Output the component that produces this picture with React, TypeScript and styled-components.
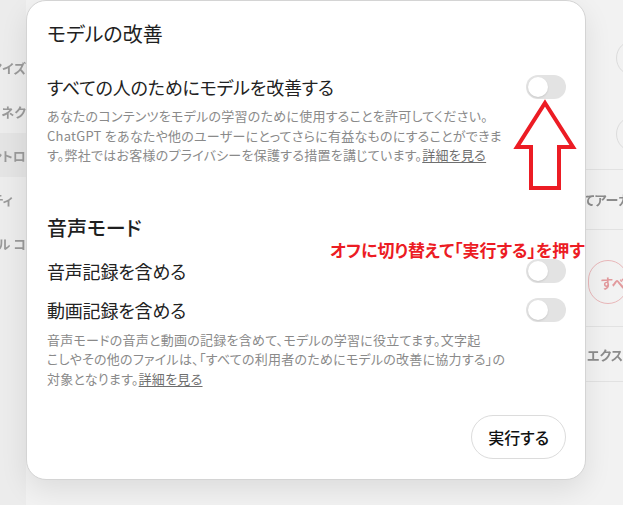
import React, { useState } from 'react';
import styled, { createGlobalStyle } from 'styled-components';

const GlobalStyle = createGlobalStyle`
	html, body {
		margin: 0;
		padding: 0;
		background: #eeeeee;
		overflow: hidden;
	}
	body {
		font-family: "Noto Sans CJK JP", "Noto Sans", sans-serif;
		font-feature-settings: "palt";
	}
`;

const Stage = styled.div`
	position: relative;
	width: 623px;
	height: 505px;
	overflow: hidden;
	background: #eeeeee;
`;

// blurred settings page behind the dialog
const Backdrop = styled.div`
	display: flex;
	width: 100%;
	height: 100%;
	filter: blur(0.7px);
`;

const SideNav = styled.nav`
	width: 26px;
	padding-top: 45px;
	display: flex;
	flex-direction: column;
	overflow: hidden;
	background: #ececec;
`;

const NavItem = styled.div<{ $active?: boolean; $pr?: number }>`
	height: 44px;
	display: flex;
	align-items: center;
	justify-content: flex-end;
	padding-right: ${(p) => p.$pr || 0}px;
	white-space: nowrap;
	font-size: 13px;
	font-weight: 600;
	color: #9a9a9a;
	background: ${(p) => (p.$active ? '#e4e4e4' : 'transparent')};
`;

const MainPane = styled.main`
	flex: 1;
	display: flex;
	justify-content: flex-end;
	background: #f2f2f2;
`;

const MainColumn = styled.div`
	width: 63px;
	display: flex;
	flex-direction: column;
	overflow: hidden;
`;

const BgRow = styled.div<{ $h: number; $line?: boolean; $align?: string; $pb?: number }>`
	height: ${(p) => p.$h}px;
	display: flex;
	align-items: ${(p) => p.$align || 'center'};
	padding-bottom: ${(p) => p.$pb || 0}px;
	white-space: nowrap;
	font-size: 13px;
	font-weight: 600;
	color: #8c8c8c;
	border-bottom: ${(p) => (p.$line ? '1px solid #e2e2e2' : 'none')};
	box-sizing: border-box;
`;

const BgPill = styled.div<{ $red?: boolean }>`
	margin-left: ${(p) => (p.$red ? '28px' : '56px')};
	height: ${(p) => (p.$red ? '44px' : '36px')};
	padding: 0 12px;
	display: flex;
	align-items: center;
	border: 1px solid ${(p) => (p.$red ? '#e9b7b9' : '#dcdcdc')};
	border-radius: 22px;
	color: #e29a9d;
	min-width: 40px;
	box-sizing: border-box;
`;

const BgLabel = styled.span<{ $indent?: number }>`
	margin-left: ${(p) => p.$indent || 0}px;
`;

const Dialog = styled.section`
	position: absolute;
	left: 26px;
	top: 0;
	width: 560px;
	height: 480px;
	box-sizing: border-box;
	padding: 19px 19px 20px 20px;
	display: flex;
	flex-direction: column;
	background: #ffffff;
	border: 1px solid #d4d4d4;
	border-radius: 20px;
	box-shadow: 0 10px 28px rgba(0, 0, 0, 0.09);
`;

const Title = styled.h2`
	margin: 0;
	font-size: 20px;
	line-height: 28px;
	font-weight: 400;
	color: #1f1f1f;
`;

const SectionTitle = styled.h3`
	margin: 49px 0 0;
	font-size: 20px;
	line-height: 28px;
	font-weight: 500;
	color: #1f1f1f;
`;

const SettingRow = styled.div<{ $gap?: number }>`
	height: 39px;
	margin-top: ${(p) => p.$gap || 0}px;
	display: flex;
	align-items: center;
	justify-content: space-between;
`;

const Label = styled.span`
	font-size: 18px;
	letter-spacing: -0.2px;
	color: #222222;
`;

const Track = styled.button<{ $on: boolean }>`
	width: 40px;
	height: 24px;
	padding: 0;
	border: none;
	border-radius: 12px;
	background: ${(p) => (p.$on ? '#10a37f' : '#e3e3e3')};
	display: flex;
	align-items: center;
	justify-content: ${(p) => (p.$on ? 'flex-end' : 'flex-start')};
	cursor: pointer;
`;

const Knob = styled.span`
	width: 20px;
	height: 20px;
	margin: 0 2px;
	border-radius: 50%;
	background: #ffffff;
	box-shadow: 0 1px 2px rgba(0, 0, 0, 0.12);
`;

const Description = styled.p`
	margin: 0;
	font-size: 13px;
	line-height: 19.5px;
	letter-spacing: 0.25px;
	color: #8a8a8a;
	white-space: nowrap;
`;

const MoreLink = styled.a`
	color: #6f6f6f;
	text-decoration: underline;
	text-underline-offset: 2px;
`;

const Footer = styled.div`
	margin-top: auto;
	display: flex;
	justify-content: flex-end;
`;

const PillButton = styled.button`
	height: 44px;
	padding: 0 16px;
	border: 1px solid #dcdcdc;
	border-radius: 22px;
	background: #ffffff;
	font-family: inherit;
	font-feature-settings: "palt";
	font-size: 16px;
	font-weight: 500;
	color: #111111;
	cursor: pointer;
`;

// red annotation drawn over the screenshot
const Note = styled.div`
	position: absolute;
	left: 330px;
	top: 239px;
	font-size: 17px;
	line-height: 22px;
	font-weight: 700;
	color: #ec1c24;
	white-space: nowrap;
`;

const ArrowMark = styled.svg`
	position: absolute;
	left: 510px;
	top: 95px;
`;

const Toggle = ({ on, onChange }: { on: boolean; onChange: (v: boolean) => void }) => (
	<Track $on={on} onClick={() => onChange(!on)}>
		<Knob />
	</Track>
);

const App = () => {
	const [improve, setImprove] = useState(false);
	const [audio, setAudio] = useState(false);
	const [video, setVideo] = useState(false);

	return (
		<Stage>
			<GlobalStyle />
			<Backdrop>
				<SideNav>
					<NavItem>カスタマイズ</NavItem>
					<NavItem>コネク</NavItem>
					<NavItem $active>データコントロ</NavItem>
					<NavItem $pr={13}>セキュリティ</NavItem>
					<NavItem>ペアレンタル コ</NavItem>
				</SideNav>
				<MainPane>
					<MainColumn>
						<BgRow $h={116}>
							<BgPill />
						</BgRow>
						<BgRow $h={54} $line $align="flex-start">
							<BgPill />
						</BgRow>
						<BgRow $h={60} $line>すべてアーカイブ</BgRow>
						<BgRow $h={97} $line $align="flex-end" $pb={22}>
							<BgPill $red>すべて</BgPill>
						</BgRow>
						<BgRow $h={55} $line>
							<BgLabel $indent={27}>エクスポート</BgLabel>
						</BgRow>
					</MainColumn>
				</MainPane>
			</Backdrop>

			<Dialog>
				<Title>モデルの改善</Title>
				<SettingRow $gap={19}>
					<Label>すべての人のためにモデルを改善する</Label>
					<Toggle on={improve} onChange={setImprove} />
				</SettingRow>
				<Description>
					あなたのコンテンツをモデルの学習のために使用することを許可してください。
					<br />
					ChatGPT をあなたや他のユーザーにとってさらに有益なものにすることができま
					<br />
					す。弊社ではお客様のプライバシーを保護する措置を講じています。<MoreLink>詳細を見る</MoreLink>
				</Description>

				<SectionTitle>音声モード</SectionTitle>
				<SettingRow $gap={10}>
					<Label>音声記録を含める</Label>
					<Toggle on={audio} onChange={setAudio} />
				</SettingRow>
				<SettingRow>
					<Label>動画記録を含める</Label>
					<Toggle on={video} onChange={setVideo} />
				</SettingRow>
				<Description>
					音声モードの音声と動画の記録を含めて、モデルの学習に役立てます。文字起
					<br />
					こしやその他のファイルは、「すべての利用者のためにモデルの改善に協力する」の
					<br />
					対象となります。<MoreLink>詳細を見る</MoreLink>
				</Description>

				<Footer>
					<PillButton>実行する</PillButton>
				</Footer>
			</Dialog>

			<Note>オフに切り替えて「実行する」を押す</Note>
			<ArrowMark width="70" height="100" viewBox="0 0 70 100">
				<polygon
					points="35,8 63,52 49,52 49,93 21,93 21,52 7,52"
					fill="none"
					stroke="#ec1c24"
					strokeWidth="4"
					strokeLinejoin="miter"
				/>
			</ArrowMark>
		</Stage>
	);
};

export default App;
